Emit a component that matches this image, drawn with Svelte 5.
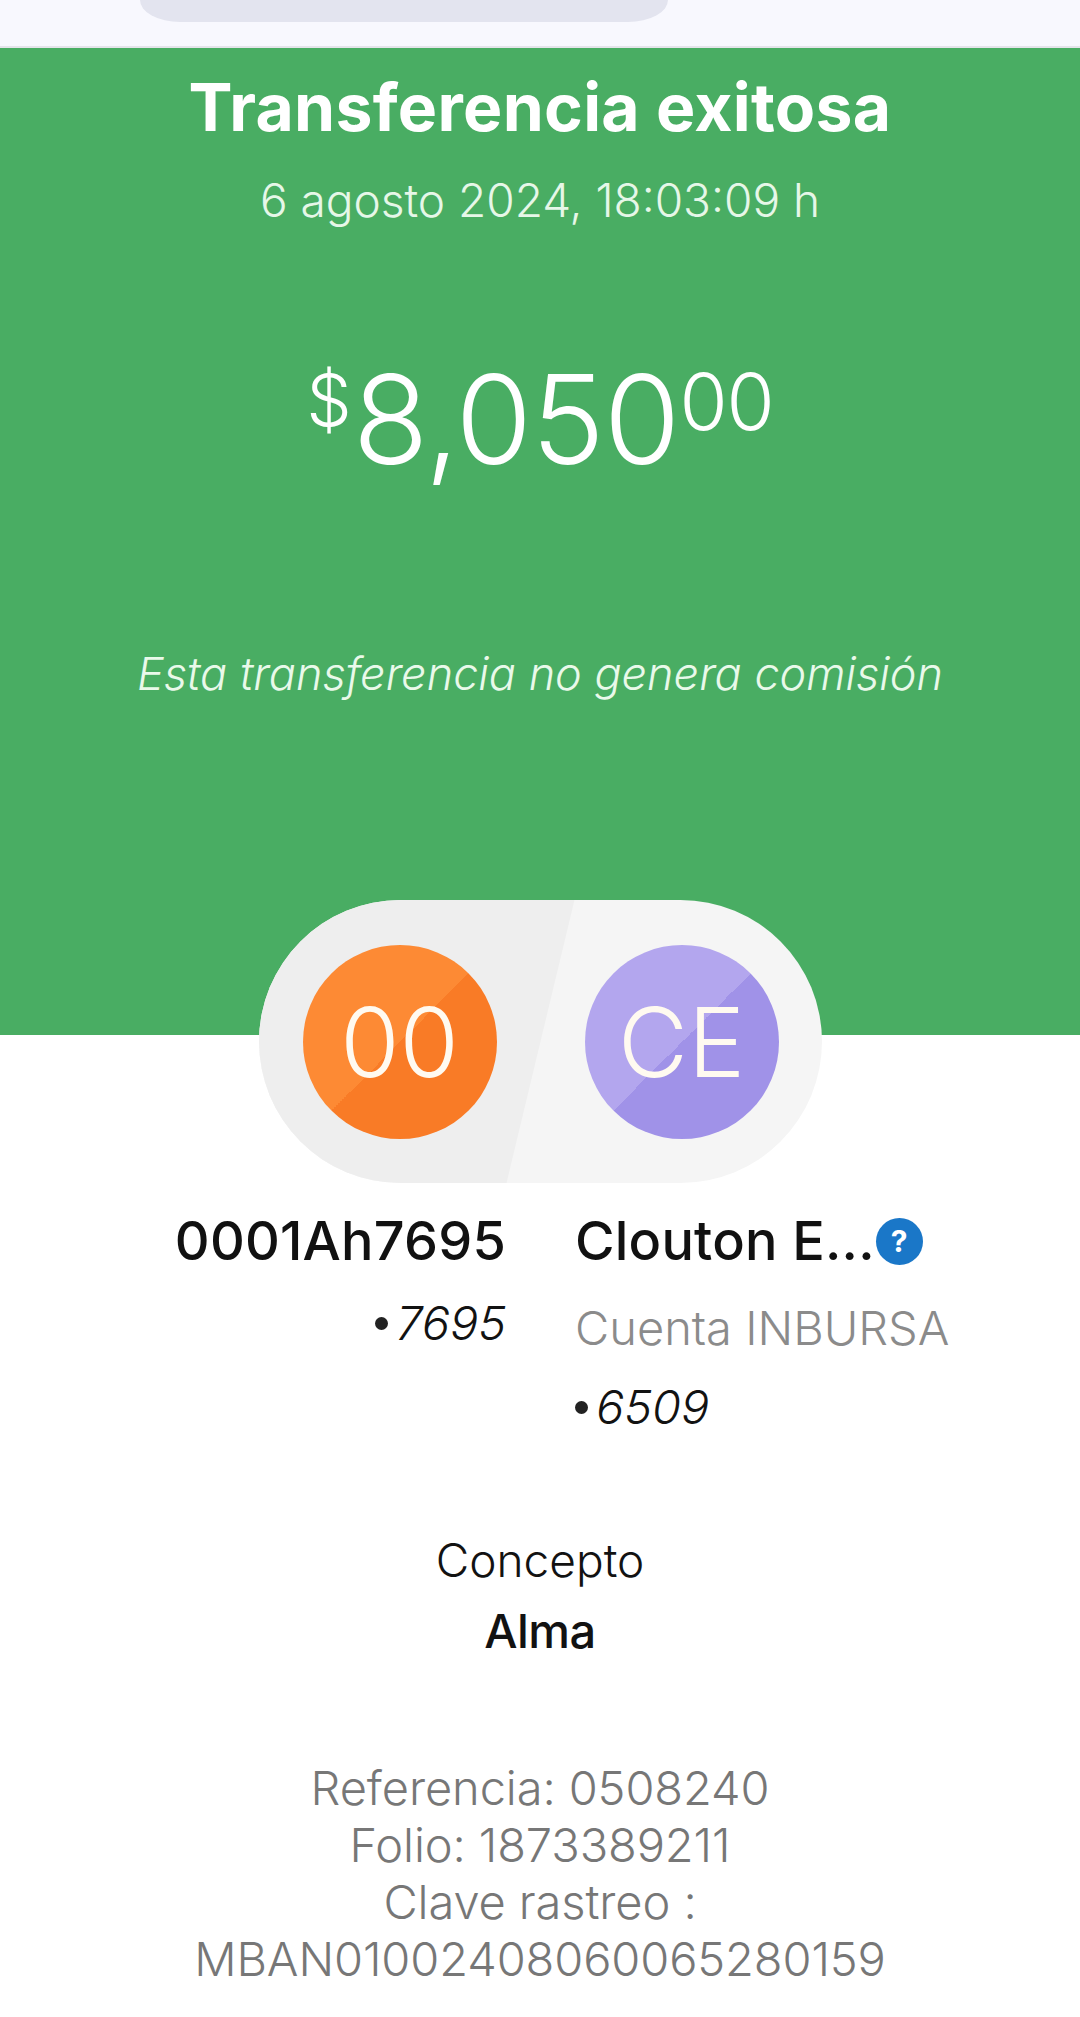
<script lang="ts">
  const refs = ["Referencia: 0508240", "Folio: 1873389211", "Clave rastreo :", "MBAN01002408060065280159"];
</script>

<div class="screen">
  <div class="topbar">
    <div class="handle"></div>
  </div>

  <section class="hero">
    <h1>Transferencia exitosa</h1>
    <p class="date">6 agosto 2024, 18:03:09 h</p>
    <p class="amount"><span class="cur">$</span>8,050<span class="cents">00</span></p>
    <p class="fee">Esta transferencia no genera comisión</p>
  </section>

  <div class="pill">
    <div class="half left"></div>
    <div class="avatar orange"><span>00</span></div>
    <div class="avatar purple"><span>CE</span></div>
  </div>

  <div class="accounts">
    <div class="acct from">
      <div class="name">0001Ah7695</div>
      <div class="num"><i class="dot"></i><em>7695</em></div>
    </div>
    <div class="acct to">
      <div class="name">Clouton E...<span class="help">?</span></div>
      <div class="bank">Cuenta INBURSA</div>
      <div class="num"><i class="dot"></i><em>6509</em></div>
    </div>
  </div>

  <div class="concept">
    <div class="label">Concepto</div>
    <div class="value">Alma</div>
  </div>

  <div class="refs">
    {#each refs as line}
      <div>{line}</div>
    {/each}
  </div>
</div>

<style>
  :global(body) {
    margin: 0;
    background: #fff;
  }

  .screen {
    width: 1080px;
    height: 2017px;
    overflow: hidden;
    font-family: Inter, Roboto, "Liberation Sans", sans-serif;
    background: #fff;
    color: #121212;
  }

  .topbar {
    height: 46px;
    background: #f8f8fe;
    border-bottom: 2px solid #e4e4ea;
    display: flex;
    justify-content: center;
  }

  .handle {
    width: 528px;
    height: 22px;
    margin-right: 272px;
    background: #e3e4ef;
    border-radius: 0 0 40px 40px / 0 0 22px 22px;
  }

  .hero {
    height: 987px;
    background: #49ad63;
    color: #fff;
    text-align: center;
    box-sizing: border-box;
    padding-top: 21px;
  }

  h1 {
    margin: 0;
    font-size: 66px;
    line-height: 76px;
    font-weight: 700;
    letter-spacing: 0.3px;
  }

  .date {
    margin: 25px 0 0;
    font-size: 46px;
    line-height: 60px;
    font-weight: 300;
    color: #e6f7e8;
  }

  .amount {
    margin: 100px 0 0;
    font-size: 124px;
    line-height: 140px;
    font-weight: 300;
    letter-spacing: -1px;
  }

  .cur {
    font-size: 72px;
    vertical-align: 38px;
    margin-right: 2px;
  }

  .cents {
    font-size: 78px;
    vertical-align: 34px;
  }

  .fee {
    margin: 157px 0 0;
    font-size: 45px;
    line-height: 56px;
    font-weight: 300;
    font-style: italic;
    color: #e9f9ea;
  }

  .pill {
    position: relative;
    width: 563px;
    height: 283px;
    margin: -135px auto 0;
    border-radius: 142px;
    background: #f5f5f5;
    overflow: hidden;
    display: flex;
    align-items: center;
    gap: 88px;
    padding-left: 44px;
    box-sizing: border-box;
  }

  .half {
    position: absolute;
    inset: 0;
    background: #eeeeee;
    clip-path: polygon(0 0, 316px 0, 248px 100%, 0 100%);
  }

  .avatar {
    position: relative;
    width: 194px;
    height: 194px;
    border-radius: 50%;
    display: flex;
    align-items: center;
    justify-content: center;
    color: #fffaf0;
    font-size: 96px;
    font-weight: 300;
    flex-shrink: 0;
  }

  .orange {
    background: linear-gradient(135deg, #fd8a34 50%, #f97b26 50%);
  }

  .purple {
    background: linear-gradient(135deg, #b3a6ee 50%, #a092e8 50%);
  }

  .accounts {
    display: grid;
    grid-template-columns: 506px 1fr;
    column-gap: 69px;
    margin-top: 22px;
  }

  .acct {
    display: flex;
    flex-direction: column;
  }

  .from {
    align-items: flex-end;
  }

  .name {
    font-size: 54px;
    line-height: 72px;
    font-weight: 500;
    color: #111;
    display: flex;
    align-items: center;
    letter-spacing: 0.2px;
  }

  .help {
    width: 47px;
    height: 47px;
    border-radius: 50%;
    background: #1a77c8;
    color: #fff;
    font-size: 30px;
    font-weight: 700;
    display: flex;
    align-items: center;
    justify-content: center;
    margin-left: 1px;
  }

  .num {
    display: flex;
    align-items: center;
    gap: 8px;
    font-size: 47px;
    line-height: 60px;
    font-weight: 300;
    margin-top: 16px;
  }

  .num em {
    font-style: italic;
  }

  .dot {
    width: 13px;
    height: 13px;
    border-radius: 50%;
    background: #222;
  }

  .bank {
    font-size: 47px;
    line-height: 60px;
    font-weight: 300;
    color: #8b8b8b;
    margin-top: 21px;
  }

  .to .num {
    margin-top: 19px;
  }

  .concept {
    margin-top: 93px;
    text-align: center;
  }

  .label {
    font-size: 46px;
    line-height: 60px;
    font-weight: 300;
  }

  .value {
    font-size: 47px;
    line-height: 60px;
    font-weight: 500;
    letter-spacing: -0.5px;
    margin-top: 11px;
  }

  .refs {
    margin-top: 98px;
    text-align: center;
    font-size: 47px;
    line-height: 57px;
    font-weight: 300;
    color: #777;
    letter-spacing: -0.1px;
  }
</style>
